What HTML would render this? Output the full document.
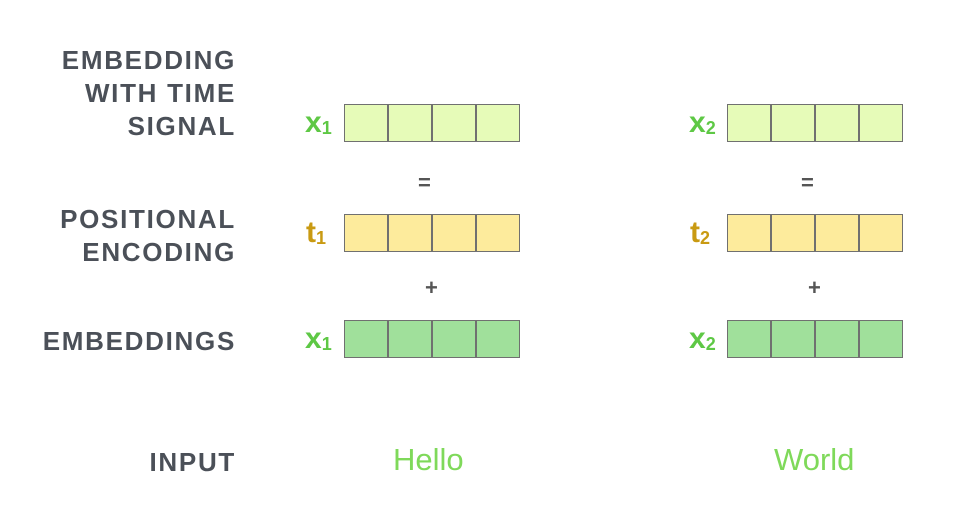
<!DOCTYPE html><html><head><style>
body{margin:0;width:975px;height:520px;background:#fff;position:relative;font-family:"Liberation Sans",sans-serif;overflow:hidden}
.l{position:absolute;right:739px;text-align:right;font-weight:bold;color:#4b5058;font-size:26px;line-height:33px;letter-spacing:1.7px}
.b{position:absolute;height:36px;width:174px;display:flex;border:1px solid #707070}
.b div{flex:1;border-right:2px solid #707070}
.b div:last-child{border-right:none}
.v{position:absolute;font-weight:bold;font-size:30px;line-height:30px}
.v sub{font-size:18px;vertical-align:baseline;position:relative;top:2px}
.op{position:absolute;font-size:22px;color:#555;font-weight:bold}
.w{position:absolute;font-size:31px;color:#7fd95a}
</style></head><body>
<div class="l" style="top:44px">EMBEDDING<br>WITH TIME<br>SIGNAL</div>
<div class="l" style="top:203px">POSITIONAL<br>ENCODING</div>
<div class="l" style="top:325px">EMBEDDINGS</div>
<div class="l" style="top:446px">INPUT</div>

<div class="v" style="left:305px;top:108px;color:#5ec845">x<sub>1</sub></div>
<div class="v" style="left:306px;top:218px;color:#c99a12">t<sub>1</sub></div>
<div class="v" style="left:305px;top:324px;color:#5ec845">x<sub>1</sub></div>
<div class="v" style="left:689px;top:108px;color:#5ec845">x<sub>2</sub></div>
<div class="v" style="left:690px;top:218px;color:#c99a12">t<sub>2</sub></div>
<div class="v" style="left:689px;top:324px;color:#5ec845">x<sub>2</sub></div>

<div class="b" style="left:344px;top:104px;background:#e6fbb8"><div></div><div></div><div></div><div></div></div>
<div class="b" style="left:344px;top:214px;background:#fdeb9c"><div></div><div></div><div></div><div></div></div>
<div class="b" style="left:344px;top:320px;background:#a0e09b"><div></div><div></div><div></div><div></div></div>
<div class="b" style="left:727px;top:104px;background:#e6fbb8"><div></div><div></div><div></div><div></div></div>
<div class="b" style="left:727px;top:214px;background:#fdeb9c"><div></div><div></div><div></div><div></div></div>
<div class="b" style="left:727px;top:320px;background:#a0e09b"><div></div><div></div><div></div><div></div></div>

<div class="op" style="left:418px;top:170px">=</div>
<div class="op" style="left:801px;top:170px">=</div>
<div class="op" style="left:425px;top:275px">+</div>
<div class="op" style="left:808px;top:275px">+</div>

<div class="w" style="left:393px;top:442px">Hello</div>
<div class="w" style="left:774px;top:442px">World</div>
</body></html>
